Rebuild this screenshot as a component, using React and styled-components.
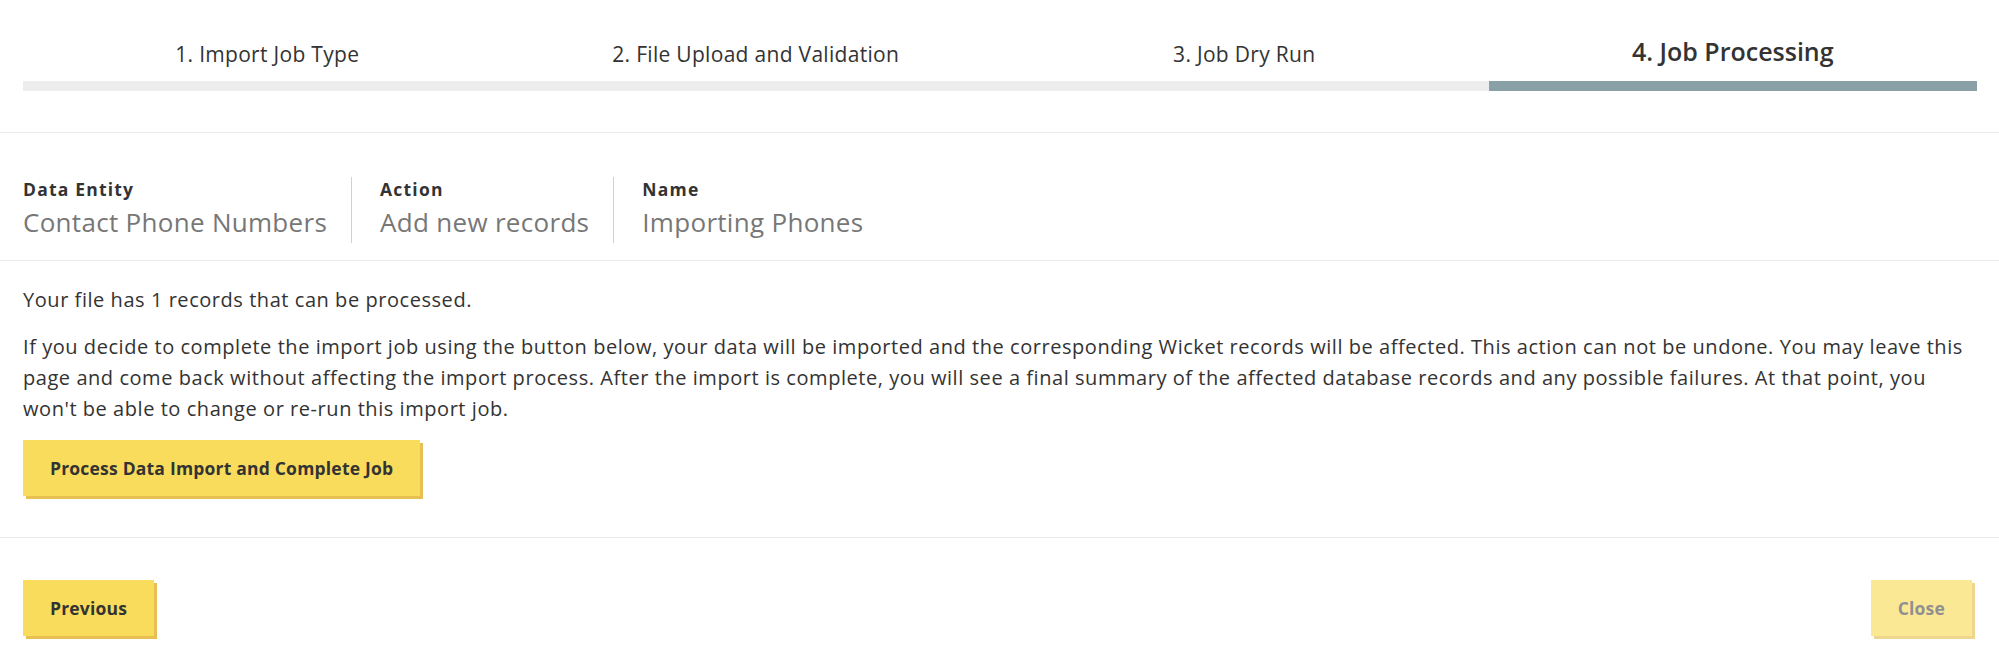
import React from 'react'
import styled, { createGlobalStyle } from 'styled-components'

const GlobalStyle = createGlobalStyle`
  html, body {
    margin: 0;
    padding: 0;
    background: #fff;
  }
  body {
    font-family: "Open Sans", "Liberation Sans", Arial, sans-serif;
    color: #333;
  }
`

const steps = [
  { label: '1. Import Job Type' },
  { label: '2. File Upload and Validation' },
  { label: '3. Job Dry Run' },
  { label: '4. Job Processing', active: true },
]

const info = [
  { title: 'Data Entity', value: 'Contact Phone Numbers' },
  { title: 'Action', value: 'Add new records' },
  { title: 'Name', value: 'Importing Phones' },
]

export default function App() {
  return (
    <Page>
      <GlobalStyle />
      <Stepper>
        {steps.map((s) => (
          <Step key={s.label}>
            <StepLabel active={s.active}>{s.label}</StepLabel>
            <StepBar active={s.active} />
          </Step>
        ))}
      </Stepper>

      <InfoBar>
        {info.map((item) => (
          <InfoItem key={item.title}>
            <InfoTitle>{item.title}</InfoTitle>
            <InfoValue>{item.value}</InfoValue>
          </InfoItem>
        ))}
      </InfoBar>

      <Content>
        <Text>Your file has 1 records that can be processed.</Text>
        <Text>
          If you decide to complete the import job using the button below, your data will be imported and the
          corresponding Wicket records will be affected. This action can not be undone. You may leave this page
          and come back without affecting the import process. After the import is complete, you will see a final
          summary of the affected database records and any possible failures. At that point, you won't be able to
          change or re-run this import job.
        </Text>
        <Button>Process Data Import and Complete Job</Button>
      </Content>

      <Footer>
        <Button>Previous</Button>
        <Button disabled>Close</Button>
      </Footer>
    </Page>
  )
}

const Page = styled.div`
  width: 100%;
  min-height: 660px;
  background: #fff;
`

const Stepper = styled.div`
  display: grid;
  grid-template-columns: repeat(4, 1fr);
  align-items: end;
  padding: 36px 22px 41px 23px;
  border-bottom: 1px solid #ebebeb;
`

const Step = styled.div`
  display: flex;
  flex-direction: column;
`

const StepLabel = styled.div`
  text-align: center;
  font-size: ${(p) => (p.active ? '25px' : '21px')};
  font-weight: ${(p) => (p.active ? 600 : 400)};
  letter-spacing: ${(p) => (p.active ? '0' : '0.3px')};
  line-height: 1.25;
  color: #333;
  margin-bottom: 14px;
`

const StepBar = styled.div`
  height: 10px;
  background: ${(p) => (p.active ? '#88a0a6' : '#ededed')};
`

const InfoBar = styled.div`
  display: flex;
  padding: 44px 23px 17px;
  border-bottom: 1px solid #ebebeb;
`

const InfoItem = styled.div`
  display: flex;
  flex-direction: column;
  padding: 0 24px 0 28px;

  &:first-child {
    padding-left: 0;
  }

  & + & {
    border-left: 1px solid #d0d0d0;
  }
`

const InfoTitle = styled.div`
  font-size: 17.5px;
  font-weight: 700;
  letter-spacing: 1.2px;
  line-height: 24px;
  color: #333;
`

const InfoValue = styled.div`
  font-size: 26px;
  letter-spacing: 0.3px;
  line-height: 42px;
  color: #777;
`

const Content = styled.div`
  padding: 23px 22px 41px 23px;
  border-bottom: 1px solid #ebebeb;
`

const Text = styled.p`
  margin: 0 0 16px;
  font-size: 20px;
  letter-spacing: 0.55px;
  line-height: 31px;
  color: #333;
`

const Button = styled.button`
  height: 56px;
  padding: 0 27px;
  border: none;
  border-radius: 0;
  background: #f9dc5c;
  box-shadow: 3px 3px 0 0 #e8c052;
  font-family: inherit;
  font-size: 17.5px;
  font-weight: 700;
  letter-spacing: 0.2px;
  color: #333;
  cursor: pointer;

  &:disabled {
    opacity: 0.65;
    color: #555;
    cursor: default;
  }
`

const Footer = styled.div`
  display: flex;
  justify-content: space-between;
  align-items: flex-start;
  padding: 42px 27px 24px 23px;
`
